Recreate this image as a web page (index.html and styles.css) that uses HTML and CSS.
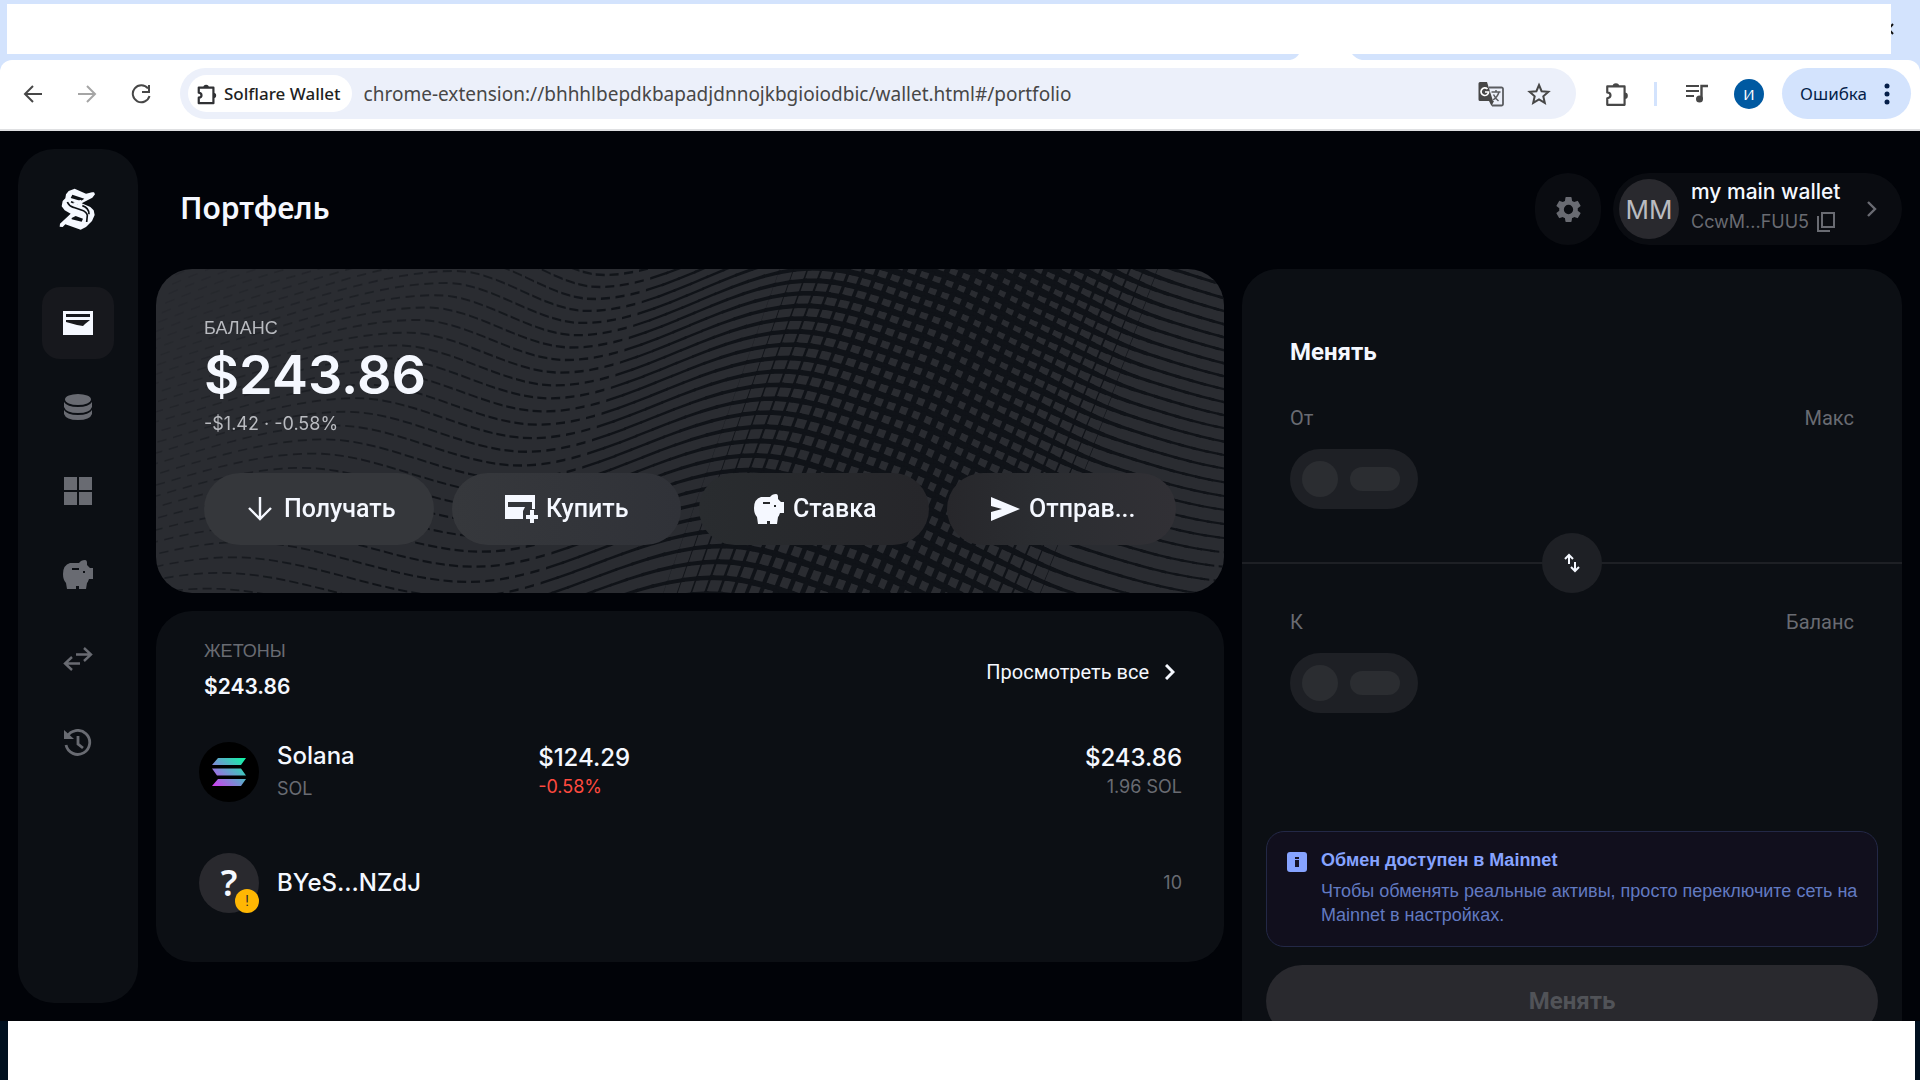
FILE: index.html
```html
<!DOCTYPE html>
<html lang="ru">
<head>
<meta charset="utf-8">
<meta name="viewport" content="width=device-width, initial-scale=1">
<title>Solflare Wallet</title>
<link rel="stylesheet" href="styles.css">
</head>
<body>
<header class="browser">
  <div class="tabstrip">
    <div class="tabs"></div>
    <svg class="window-close" width="3" height="16" viewBox="0 0 3 16"><path d="M-10 0 2 13M-10 16 2 3" stroke="#111" stroke-width="2"/></svg>
    <svg class="tab-foot" width="72" height="6" viewBox="0 0 72 6"><path d="M0 6Q6 5 9 0H62Q66 5 72 6Z" fill="#fff"/></svg>
  </div>
  <div class="toolbar">
    <div class="nav-buttons">
      <button class="tool" aria-label="Назад"><svg width="20" height="20" viewBox="0 0 20 20" fill="none" stroke="#474747" stroke-width="2"><path d="M19 10H3M10 2 2 10l8 8"/></svg></button>
      <button class="tool" aria-label="Вперёд"><svg width="20" height="20" viewBox="0 0 20 20" fill="none" stroke="#a5a5a5" stroke-width="2"><path d="M1 10h16M10 2l8 8-8 8"/></svg></button>
      <button class="tool" aria-label="Обновить"><svg width="20" height="20" viewBox="0 0 20 20" fill="none" stroke="#474747" stroke-width="2"><path d="M17 4.500A8.500 8.500 0 1 0 18.500 12M18 1v7h-7"/></svg></button>
    </div>
    <div class="omnibox">
      <button class="site-chip">
        <svg width="22" height="22" viewBox="0 0 24 24" fill="none" stroke="#303134" stroke-width="2.400" stroke-linejoin="round"><path d="M3 5h16v17H3v-6c4-.500 4-5 0-5.500z"/><path d="M8 5a3 3 0 0 1 6 0zM19 10.500a3 3 0 0 1 0 6z" fill="#303134" stroke="none"/></svg>
        <span>Solflare Wallet</span>
      </button>
      <span class="url">chrome-extension://bhhhlbepdkbapadjdnnojkbgioiodbic/wallet.html#/portfolio</span>
      <button class="tool" aria-label="Перевести">
        <svg width="26" height="26" viewBox="0 0 26 26"><path d="M11 6.500h12.500a1.500 1.500 0 0 1 1.500 1.500v15a1.500 1.500 0 0 1-1.500 1.500H14" fill="none" stroke="#5a5c60" stroke-width="1.800"/><path d="M2 1h7l6 19H2a1.500 1.500 0 0 1-1.500-1.500v-16A1.500 1.500 0 0 1 2 1zM11 20h5l-2.500 5z" fill="#474747"/><path d="M9.500 8A3.800 3.800 0 1 0 10.600 11H7" fill="none" stroke="#fff" stroke-width="1.700"/><path d="M13.500 11h9M18 9v2M21 11q-1.500 5-6 8M15.500 13.500q2 4 5 6.500" fill="none" stroke="#5a5c60" stroke-width="1.500"/></svg>
      </button>
      <button class="tool" aria-label="В закладки">
        <svg width="24" height="24" viewBox="0 0 24 24" fill="none" stroke="#474747" stroke-width="2"><path d="m12 3 2.600 6.200 6.800.600-5.100 4.500 1.500 6.600L12 17.400l-5.800 3.500 1.500-6.600-5.100-4.500 6.800-.600z"/></svg>
      </button>
    </div>
    <div class="extensions">
      <button class="tool" aria-label="Расширения"><svg width="26" height="26" viewBox="0 0 24 24" fill="none" stroke="#474747" stroke-width="2" stroke-linejoin="round"><path d="M3 5h16v17H3v-6c4-.500 4-5 0-5.500z"/><path d="M8 5a3 3 0 0 1 6 0zM19 10.500a3 3 0 0 1 0 6z" fill="#474747" stroke="none"/></svg></button>
      <span class="divider"></span>
      <button class="tool" aria-label="Медиа"><svg width="24" height="20" viewBox="0 0 24 20"><path d="M1 2h13M1 7h13M1 12h8" stroke="#474747" stroke-width="2.200"/><path d="M16.500 15V2H23" fill="none" stroke="#474747" stroke-width="2.400"/><circle cx="14.500" cy="15" r="3.500" fill="#474747"/></svg></button>
      <button class="profile" aria-label="Профиль">И</button>
      <button class="error-pill">Ошибка<svg width="6" height="24" viewBox="0 0 6 24" fill="#041e49"><circle cx="3" cy="4" r="2.500"/><circle cx="3" cy="12" r="2.500"/><circle cx="3" cy="20" r="2.500"/></svg></button>
    </div>
  </div>
</header>

<div class="app">
  <nav class="sidebar" aria-label="Меню">
    <a class="logo" href="#/" aria-label="Solflare">
      <svg width="50" height="50" viewBox="0 0 150 150"><path d="M123 22l3 6-8 10-32 17 26 11 10 10 3 14-8 18-18 18-16 8-46-16-8 8-9-1 1-9 32-30-18-10-9-12 3-16 8-8 2-12 8-10 18-7 34 15 18-4z" fill="#f5f8ff"/><path d="M58 29l36 12-10 7-31-9zM56 99l12-6 22 8-4 9-30-7z" fill="#0c0f14"/><path d="M43 51q5 12 18 16l24 8q16 5 18 16l-2 20M54 50l20 8M88 62q20 6 20 26" fill="none" stroke="#0c0f14" stroke-width="5"/><path d="M62 58l24-9" stroke="#f5f8ff" stroke-width="10"/></svg>
    </a>
    <a class="nav-item is-active" href="#/portfolio" aria-label="Портфель"><svg width="30" height="24" viewBox="0 0 30 24"><path d="M0 0h30v24H0z" fill="#f5f8ff"/><path d="M3 3h24v3H3zM3 9h24l-5 4-2 2-6-1-11-3z" fill="#17181d"/></svg></a>
    <a class="nav-item" href="#/tokens" aria-label="Жетоны"><svg width="28" height="26" viewBox="0 0 28 26" fill="#696b72"><ellipse cx="14" cy="5.500" rx="13" ry="5.500"/><path d="M0 8q3 5 14 5t14-5v5q-2 6-14 6T0 13zM0 16q3 5 14 5t14-5v4q-2 6-14 6T0 20z"/></svg></a>
    <a class="nav-item" href="#/collectibles" aria-label="Коллекция"><svg width="28" height="28" viewBox="0 0 28 28" fill="#696b72"><path d="M0 0h13v13H0zM15 0h13v13H15zM0 15h13v13H0zM15 15h13v13H15z"/></svg></a>
    <a class="nav-item" href="#/stake" aria-label="Ставка"><svg width="30" height="30" viewBox="0 0 30 30"><path d="M7 3h9q2-3 6-3 2 0 2 3v2l3 3h3v11h-4q-1 3-2 4l-1 6h-7v-3h-3v3H4L3 23q-3-3-3-9Q0 5 7 3z" fill="#696b72"/><path d="M9 8h7v2H9zM20 11h2v2h-2z" fill="#0c0f14"/></svg></a>
    <a class="nav-item" href="#/swap" aria-label="Обмен"><svg width="30" height="24" viewBox="0 0 30 24" fill="none" stroke="#696b72" stroke-width="2.400"><path d="M13 7.500h15M21 1l7 6.500-7 6.500M17 16.500H2M9 10l-7 6.500L9 23"/></svg></a>
    <a class="nav-item" href="#/history" aria-label="История"><svg width="28" height="28" viewBox="0 0 28 28" fill="none" stroke="#696b72" stroke-width="2.800"><path d="M3 8A12 12 0 1 1 2 16M14 7v8l5 4"/><path d="M0 1v9h10z" fill="#696b72" stroke="none"/></svg></a>
  </nav>

  <div class="page">
    <header class="page-head">
      <h1>Портфель</h1>
      <div class="account-tools">
        <button class="settings" aria-label="Настройки"><svg width="31" height="31" viewBox="0 0 24 24" fill="#696b72"><path d="M19.140 12.940c.040-.300.060-.610.060-.940 0-.320-.020-.640-.070-.940l2.030-1.580a.490.490 0 0 0 .120-.610l-1.920-3.320a.488.488 0 0 0-.590-.220l-2.390.960c-.500-.380-1.030-.700-1.620-.940l-.360-2.540a.484.484 0 0 0-.480-.410h-3.840c-.240 0-.430.170-.470.410l-.360 2.540c-.590.240-1.130.570-1.620.940l-2.390-.960c-.220-.080-.470 0-.590.220L2.740 8.870c-.120.210-.080.470.120.610l2.030 1.580c-.050.300-.090.630-.090.940s.020.640.070.940l-2.030 1.580a.490.490 0 0 0-.120.610l1.920 3.320c.120.220.370.290.590.220l2.390-.960c.500.380 1.030.700 1.620.940l.360 2.540c.050.240.240.410.480.410h3.840c.240 0 .440-.170.470-.410l.360-2.540c.590-.240 1.130-.560 1.620-.940l2.390.960c.220.080.470 0 .590-.220l1.920-3.320c.120-.220.070-.470-.120-.610l-2.010-1.580zM12 15.600a3.600 3.600 0 1 1 0-7.200 3.600 3.600 0 0 1 0 7.200z"/></svg></button>
        <button class="account">
          <span class="avatar">MM</span>
          <span class="account-text">
            <span class="account-name">my main wallet</span>
            <span class="account-address">CcwM...FUU5 <svg width="18" height="20" viewBox="0 0 18 20" fill="none" stroke="#696b72" stroke-width="2"><path d="M5 1h12v14H5zM1 4v15h12"/></svg></span>
          </span>
          <svg class="chevron" width="10" height="16" viewBox="0 0 10 16" fill="none" stroke="#696b72" stroke-width="2.400"><path d="m1 1 7 7-7 7"/></svg>
        </button>
      </div>
    </header>

    <div class="columns">
      <main class="left">
        <section class="balance">
          <canvas class="waves" id="waves"></canvas>
          <div class="balance-body">
            <h2 class="label">БАЛАНС</h2>
            <p class="total">$243.86</p>
            <p class="change">-$1.42 · -0.58%</p>
            <div class="actions">
              <button class="action action-receive"><span class="action-icon"><svg width="24" height="24" viewBox="0 0 24 24" fill="none" stroke="#f5f8ff" stroke-width="2.400"><path d="M12 0v22M1 11l11 11 11-11"/></svg></span>Получать</button>
              <button class="action action-buy"><span class="action-icon"><svg width="33" height="28" viewBox="0 0 33 28" fill="#f5f8ff"><path d="M0 0h30v14h-3v-2H20l-2 4v8H0z"/><path d="M3 7h24v5H3z" fill="#34363a"/><path d="M25 15h4v5h4v4h-4v4h-4v-4h-4v-4h4z"/></svg></span>Купить</button>
              <button class="action action-stake"><span class="action-icon"><svg width="30" height="30" viewBox="0 0 30 30"><path d="M7 3h9q2-3 6-3 2 0 2 3v2l3 3h3v11h-4q-1 3-2 4l-1 7h-7v-3h-3v3H4L3 23q-3-3-3-9Q0 5 7 3z" fill="#f5f8ff"/><path d="M9 8h7v2H9zM20 11h2v2h-2z" fill="#26282b"/></svg></span>Ставка</button>
              <button class="action action-send"><span class="action-icon"><svg width="29" height="24" viewBox="0 0 29 24"><path d="m0 0 29 12L0 24v-9l11-3L0 9z" fill="#f5f8ff"/></svg></span>Отправ...</button>
            </div>
          </div>
        </section>

        <section class="tokens">
          <div class="tokens-head">
            <div>
              <h2 class="label">ЖЕТОНЫ</h2>
              <p class="subtotal">$243.86</p>
            </div>
            <a class="view-all" href="#/tokens">Просмотреть все <svg width="10" height="16" viewBox="0 0 10 16" fill="none" stroke="#f5f8ff" stroke-width="3"><path d="m1 1 7 7-7 7"/></svg></a>
          </div>
          <table class="token-table">
            <tbody>
              <tr>
                <td class="name">
                  <div class="token">
                    <span class="token-icon token-icon-sol"><svg width="34" height="28" viewBox="0 0 34 28"><defs><linearGradient id="sol" gradientUnits="userSpaceOnUse" x1="4" y1="30" x2="30" y2="0"><stop offset="0" stop-color="#d040f0"/><stop offset=".5" stop-color="#6c9bd0"/><stop offset="1" stop-color="#14f1a8"/></linearGradient></defs><path d="M6 0h28l-5 7H0zM0 10.500h29l5 7H5zM6 21h28l-5 7H0z" fill="url(#sol)"/></svg></span>
                    <div class="token-text"><p class="strong">Solana</p><p class="muted">SOL</p></div>
                  </div>
                </td>
                <td><p class="strong">$124.29</p><p class="loss">-0.58%</p></td>
                <td class="amount"><p class="strong">$243.86</p><p class="muted">1.96 SOL</p></td>
              </tr>
              <tr>
                <td class="name">
                  <div class="token">
                    <span class="token-icon">?<span class="warn">!</span></span>
                    <p class="strong">BYeS...NZdJ</p>
                  </div>
                </td>
                <td></td>
                <td class="amount"><p class="muted">10</p></td>
              </tr>
            </tbody>
          </table>
        </section>
      </main>

      <aside class="swap">
        <section class="swap-side swap-from">
          <h2>Менять</h2>
          <div class="swap-row"><span>От</span><span>Макс</span></div>
          <div class="skeleton"><span class="skeleton-dot"></span><span class="skeleton-bar"></span></div>
        </section>
        <div class="swap-divider"><button class="flip" aria-label="Поменять местами"><svg width="16" height="20" viewBox="0 0 16 20" fill="none" stroke="#f5f8ff" stroke-width="2"><path d="M5 11V2M1 6l4-4 4 4M11 9v9M7 14l4 4 4-4"/></svg></button></div>
        <section class="swap-side swap-to">
          <div class="swap-row"><span>К</span><span>Баланс</span></div>
          <div class="skeleton"><span class="skeleton-dot"></span><span class="skeleton-bar"></span></div>
        </section>
        <div class="swap-foot">
          <div class="notice">
            <svg width="20" height="20" viewBox="0 0 20 20"><rect width="20" height="20" rx="3" fill="#86a3ff"/><path d="M8 5h4v2H8zM8 8h4v7H8z" fill="#151226"/></svg>
            <div>
              <h3>Обмен доступен в Mainnet</h3>
              <p>Чтобы обменять реальные активы, просто переключите сеть на Mainnet в настройках.</p>
            </div>
          </div>
          <button class="submit" disabled>Менять</button>
        </div>
      </aside>
    </div>
  </div>
</div>
<footer class="bottom"><div></div></footer>
<script src="waves.js"></script>
</body>
</html>
```

FILE: styles.css
```css
* { box-sizing: border-box; }
body {
  margin: 0;
  height: 100vh;
  display: flex;
  flex-direction: column;
  overflow: hidden;
  background: #010308;
  color: #f5f8ff;
  font-family: Inter, Roboto, "Liberation Sans", sans-serif;
}
h1, h2, h3, p { margin: 0; font-weight: 400; }
button { border: 0; padding: 0; margin: 0; background: none; font: inherit; color: inherit; }
a { color: inherit; text-decoration: none; }
svg { display: block; flex: none; }

/* Browser frame */
.browser { flex: none; background: #d3e3fd; font-family: "Noto Sans", sans-serif; }
.tabstrip { position: relative; display: flex; align-items: center; height: 60px; padding: 4px 26px 6px 7px; }
.tabs { flex: 1; align-self: stretch; background: #fff; }
.tab-foot { position: absolute; right: 558px; bottom: 0; }
.toolbar {
  display: flex;
  align-items: center;
  height: 71px;
  padding: 0 9px 2px 20px;
  background: #fff;
  border-radius: 12px 12px 0 0;
  border-bottom: 2px solid #dfe0e2;
}
.tool { display: grid; place-items: center; width: 26px; height: 32px; }
.nav-buttons { display: flex; gap: 28px; width: 160px; }
.omnibox {
  flex: 1;
  display: flex;
  align-items: center;
  height: 51px;
  padding: 0 24px 0 8px;
  gap: 22px;
  border-radius: 26px;
  background: #ecf0fa;
}
.site-chip {
  display: flex;
  align-items: center;
  gap: 6px;
  height: 37px;
  padding: 0 11px 0 8px;
  margin-right: -10px;
  border-radius: 19px;
  background: #fff;
  color: #1f1f1f;
  font-size: 17px;
  font-weight: 500;
  white-space: nowrap;
}
.url { flex: 1; color: #474747; font-size: 19px; white-space: nowrap; overflow: hidden; }
.extensions { display: flex; align-items: center; padding-left: 28px; }
.divider { width: 3px; height: 24px; margin: 0 27px 0 24px; background: #d3e3fd; }
.profile { width: 30px; height: 30px; margin: 0 18px 0 24px; border-radius: 50%; background: #0059a1; color: #fff; font-size: 15px; }
.error-pill {
  display: flex;
  align-items: center;
  justify-content: space-between;
  width: 129px;
  height: 51px;
  padding: 0 21px 0 18px;
  border-radius: 26px;
  background: #d3e3fd;
  color: #041e49;
  font-size: 17px;
}

/* Wallet shell */
.app { flex: 1; min-height: 0; display: flex; gap: 18px; padding: 18px 18px 0; overflow: hidden; }
.sidebar {
  display: flex;
  flex-direction: column;
  align-items: center;
  gap: 12px;
  width: 120px;
  flex: none;
  margin-bottom: 18px;
  padding-top: 36px;
  border-radius: 36px;
  background: #0c0f14;
}
.logo { display: grid; place-items: center; height: 48px; margin-bottom: 42px; }
.nav-item { display: grid; place-items: center; width: 72px; height: 72px; border-radius: 18px; }
.nav-item.is-active { background: #17181d; }
.page { flex: 1; min-width: 0; }
.page-head { display: flex; align-items: center; justify-content: space-between; height: 120px; padding-left: 24px; }
.page-head h1 { padding-bottom: 2px; font: 600 30px/36px "Noto Sans", sans-serif; }
.account-tools { display: flex; gap: 12px; }
.settings { display: grid; place-items: center; width: 66px; height: 72px; border-radius: 36px; background: #0a0c11; }
.account { display: flex; align-items: center; width: 289px; height: 72px; padding: 0 25px 0 6px; border-radius: 36px; background: #0a0c11; text-align: left; }
.avatar { display: grid; place-items: center; width: 60px; height: 60px; margin-right: 12px; border-radius: 50%; background: #29292e; color: #b9bbc0; font-size: 26px; }
.account-text { flex: 1; display: flex; flex-direction: column; gap: 2px; padding-bottom: 4px; }
.account-name { font-size: 21px; font-weight: 500; line-height: 28px; white-space: nowrap; }
.account-address { display: flex; align-items: center; gap: 8px; color: #696b72; font-size: 18px; line-height: 28px; }

/* Columns */
.columns { display: grid; grid-template-columns: minmax(0, 1068fr) minmax(0, 660fr); gap: 18px; align-items: start; }
.left { display: grid; gap: 18px; }
.balance { position: relative; overflow: hidden; border-radius: 36px; background: #2a2c31; }
.waves { position: absolute; inset: 0; width: 100%; height: 100%; }
.balance-body { position: relative; padding: 47px 48px 48px; }
.label { font: 400 18px/24px "Liberation Sans", sans-serif; color: #b9bbc0; }
.total { font-size: 54px; font-weight: 600; line-height: 69px; }
.change { padding-bottom: 34px; color: #b9bbc0; font-size: 18px; line-height: 30px; }
.actions { display: grid; grid-template-columns: repeat(4, minmax(0, 1fr)); gap: 18px; }
.action { display: flex; align-items: center; justify-content: center; gap: 6px; height: 72px; border-radius: 36px; font: 500 25px/30px Roboto, sans-serif; white-space: nowrap; }
.action-icon { display: grid; place-items: center; width: 36px; height: 36px; }
.action-receive { background: #35373b; }
.action-buy { background: linear-gradient(90deg, #36383c, #303238); }
.action-stake { background: linear-gradient(90deg, #292c2f, #26262a); }
.action-send { background: linear-gradient(90deg, #27272b, #2b2d31 40%, #313035); }

.tokens { padding: 28px 42px 24px 43px; border-radius: 36px; background: #0c0f14; }
.tokens-head { display: flex; align-items: center; justify-content: space-between; padding: 0 7px 0 5px; }
.tokens .label { color: #696b72; }
.subtotal { font-size: 21px; font-weight: 600; line-height: 48px; }
.view-all { display: flex; align-items: center; gap: 16px; padding-bottom: 6px; font: 400 20px/24px Roboto, sans-serif; }
.token-table { width: 100%; margin-top: 5px; border-collapse: collapse; table-layout: fixed; }
.token-table td { height: 111px; padding: 0; vertical-align: middle; }
.token-table .name { width: 34.5%; }
.token { display: flex; align-items: center; gap: 18px; }
.token-text { display: grid; gap: 4px; }
.token-icon { position: relative; display: grid; place-items: center; width: 60px; height: 60px; border-radius: 50%; background: #29292e; font: 600 36px/40px "Noto Sans", sans-serif; }
.token-icon-sol { background: #000; }
.warn { position: absolute; right: 0; bottom: 0; width: 24px; height: 24px; border-radius: 50%; background: #ffb703; color: #29292e; font: 400 14px/24px Roboto, sans-serif; text-align: center; }
.strong { font-size: 24px; font-weight: 500; line-height: 30px; }
.muted, .loss { font-size: 18px; line-height: 28px; color: #696b72; }
.loss { color: #ff4a3f; }
.amount { text-align: right; }

/* Swap panel */
.swap { border-radius: 36px 36px 0 0; background: #0c0f14; font-family: Roboto, sans-serif; }
.swap-side { padding: 0 48px; }
.swap-from { padding-top: 68px; }
.swap h2 { padding-bottom: 36px; font-size: 24px; font-weight: 700; line-height: 30px; }
.swap-row { display: flex; justify-content: space-between; color: #696b72; font-size: 20px; line-height: 30px; }
.skeleton { display: flex; align-items: center; gap: 12px; width: 128px; height: 60px; margin-top: 16px; padding: 0 12px; border-radius: 30px; background: #1e2025; }
.skeleton-dot { width: 36px; height: 36px; border-radius: 50%; background: #2b2d31; }
.skeleton-bar { width: 50px; height: 24px; border-radius: 12px; background: #2b2d31; }
.swap-divider { display: grid; place-items: center; height: 60px; margin-top: 24px; background: linear-gradient(#1e2025, #1e2025) center / 100% 2px no-repeat; }
.flip { display: grid; place-items: center; width: 60px; height: 60px; border-radius: 50%; background: #1e2025; }
.swap-to { padding-top: 14px; padding-bottom: 118px; }
.swap-foot { display: grid; gap: 18px; padding: 0 24px 24px; }
.notice { display: flex; gap: 14px; min-height: 116px; padding: 15px 12px 15px 20px; border: 1px solid #232846; border-radius: 18px; background: #110f1d; font-family: "Liberation Sans", sans-serif; }
.notice svg { margin-top: 5px; }
.notice h3 { padding-bottom: 5px; color: #86a3ff; font-size: 18px; font-weight: 700; line-height: 27px; }
.notice p { color: #627ac2; font-size: 18px; line-height: 24px; }
.submit { height: 72px; border-radius: 36px; background: #29292e; color: #515358; font-size: 24px; font-weight: 700; }

.bottom { flex: none; height: 59px; padding: 0 5px 0 8px; background: #01101f; }
.bottom div { height: 100%; background: #fff; }
```

FILE: waves.js
```js
// Draws the woven wave pattern behind the balance card.
(function () {
  var canvas = document.getElementById('waves');
  var W = canvas.width = canvas.clientWidth;
  var H = canvas.height = canvas.clientHeight;
  var g = canvas.getContext('2d');

  function lerpTable(t, v) {
    if (v <= t[0][0]) return t[0][1];
    for (var i = 1; i < t.length; i++) {
      if (v <= t[i][0]) {
        var k = (v - t[i - 1][0]) / (t[i][0] - t[i - 1][0]);
        return t[i - 1][1] + k * (t[i][1] - t[i - 1][1]);
      }
    }
    return t[t.length - 1][1];
  }

  // Monotone cubic through the row's crests and troughs.
  function rowCurve(b) {
    var d = b - 138;
    var c1 = 194 - 0.78 * d, tr = 372 - 0.44 * d, c2 = 623 - 0.33 * d;
    var p = [[c1 - 420, b + 130], [c1 - 200, b + 44], [c1, b], [tr, b + 40], [c2, b - 27],
      [c2 + 120, b + 4], [c2 + 220, b + 50], [c2 + 320, b + 95], [c2 + 444, b + 126], [c2 + 600, b + 138], [c2 + 900, b + 120]];
    var m = p.map(function (q, i) {
      if (i === 0 || i === p.length - 1) return 0;
      var s0 = (q[1] - p[i - 1][1]) / (q[0] - p[i - 1][0]);
      var s1 = (p[i + 1][1] - q[1]) / (p[i + 1][0] - q[0]);
      return s0 * s1 <= 0 ? 0 : 2 * s0 * s1 / (s0 + s1);
    });
    m[0] = -0.5;
    return function (x) {
      var i = 0;
      while (i < p.length - 2 && x > p[i + 1][0]) i++;
      var h = p[i + 1][0] - p[i][0], t = (x - p[i][0]) / h, t2 = t * t, t3 = t2 * t;
      return (2 * t3 - 3 * t2 + 1) * p[i][1] + (t3 - 2 * t2 + t) * h * m[i] +
        (3 * t2 - 2 * t3) * p[i + 1][1] + (t3 - t2) * h * m[i + 1];
    };
  }

  var thick = [[0, 1.4], [350, 2.2], [520, 2.6], [590, 4], [680, 6.5], [840, 8], [900, 6.5], [980, 3], [1100, 2], [1300, 1.6]];
  var cross = [[570, 0], [610, 2], [680, 4.5], [800, 6.5], [870, 4], [920, 2], [965, 0]];
  var dark = '#101318';
  var step = 14;

  var rows = [], b = -190;
  while (b < H + 80) {
    rows.push(rowCurve(b));
    b += b < 0 ? 12 : 12 + 4 * b / H;
  }

  g.fillStyle = dark;
  rows.forEach(function (f, k) {
    var next = rows[k + 1];
    for (var j = -2; j * step < W + 260; j++) {
      var s = j * step;
      var x0 = s;
      for (var n = 0; n < 3; n++) x0 = s - 0.36 * (f(x0) - 138);
      var x1 = x0 + step;
      if (x1 < -20 || x0 > W + 20) continue;
      var y0 = f(x0), y1 = f(x1);
      var h0 = lerpTable(thick, s) / 2, h1 = lerpTable(thick, s + step) / 2;
      var dash = s < 440 || s > 1100;
      // The shear shortens steep runs, so solid bands reach the next cell's own start.
      var xe = dash ? x0 + 9 : x1 + 4;
      y1 = f(xe);
      g.globalAlpha = dash ? Math.max(0.12, Math.min(1, 0.1 + (x0 - 60) / 480 + y0 / H * 0.6)) : 1;
      g.beginPath();
      g.moveTo(x0, y0 - h0);
      g.lineTo(xe, y1 - h1);
      g.lineTo(xe, y1 + h1);
      g.lineTo(x0, y0 + h0);
      g.fill();
      var w = lerpTable(cross, s);
      if (w > 0 && next) {
        var yn = next(x0), xn = x0 - 0.36 * (yn - y0);
        yn = next(xn);
        g.globalAlpha = 1;
        g.beginPath();
        g.moveTo(x0 - w / 2, y0);
        g.lineTo(x0 + w / 2, f(x0 + w / 2));
        g.lineTo(xn + w / 2, next(xn + w / 2));
        g.lineTo(xn - w / 2, yn);
        g.fill();
      }
    }
  });
})();
```
